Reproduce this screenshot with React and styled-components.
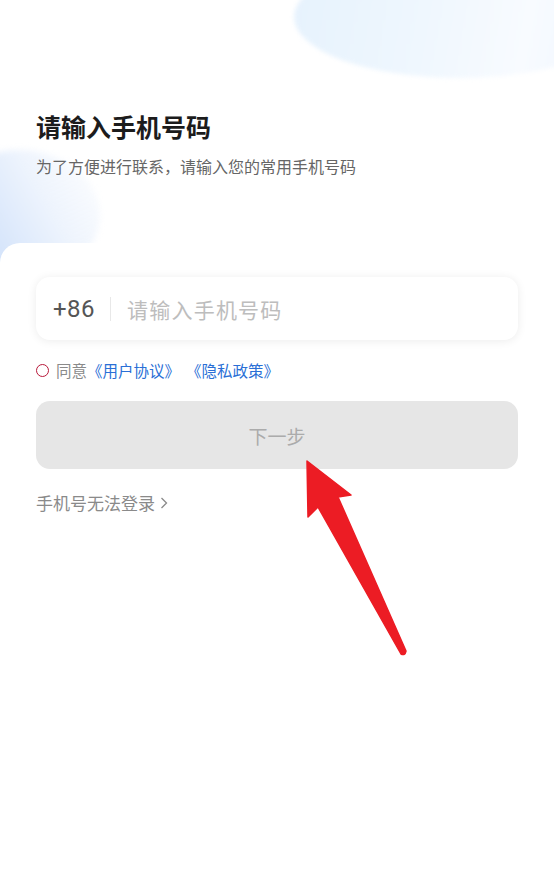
import React from "react";
import styled, { createGlobalStyle } from "styled-components";

const Global = createGlobalStyle`
  html, body { margin: 0; padding: 0; background: #fff; }
  body { font-family: "Noto Sans CJK SC", "Noto Sans", sans-serif; }
  * { box-sizing: border-box; }
`;

const Page = styled.div`
  position: relative;
  width: 554px;
  height: 883px;
  overflow: hidden;
  background: #fff;
`;

const BlobTop = styled.div`
  position: absolute;
  left: 294px;
  top: -44px;
  width: 330px;
  height: 122px;
  border-radius: 50%;
  background: linear-gradient(100deg, #e6f2fd 0%, #eff7fe 40%, #f8fbff 70%, #edf5fe 100%);
  filter: blur(2px);
`;

const BlobLeft = styled.div`
  position: absolute;
  left: -60px;
  top: 150px;
  width: 160px;
  height: 130px;
  border-radius: 50%;
  background: linear-gradient(60deg, #bcd3f8 0%, #d8e6fb 35%, #eef4fd 65%, rgba(255,255,255,0) 100%);
  filter: blur(3px);
`;

const Header = styled.header`
  position: relative;
  padding: 108px 36px 0;
  height: 243px;
`;

const Title = styled.h1`
  margin: 0;
  font-size: 25px;
  line-height: 36px;
  font-weight: 700;
  color: #1c1c1c;
`;

const Subtitle = styled.p`
  margin: 10px 0 0;
  font-size: 16px;
  line-height: 24px;
  color: #666;
`;

const Sheet = styled.main`
  position: relative;
  background: #fff;
  border-radius: 20px 20px 0 0;
  padding: 34px 36px 0;
  display: flex;
  flex-direction: column;
`;

const InputCard = styled.div`
  height: 63px;
  border-radius: 14px;
  background: #fff;
  box-shadow: 0 1px 10px rgba(0, 0, 0, 0.08);
  display: flex;
  align-items: center;
  padding: 0 17px;
`;

const Code = styled.span`
  font-family: "Roboto", "Noto Sans", sans-serif;
  font-size: 24px;
  letter-spacing: 0.5px;
  color: #555;
`;

const Divider = styled.span`
  width: 1px;
  height: 24px;
  background: #e8e8e8;
  margin: 0 16px 0 15px;
`;

const Placeholder = styled.span`
  font-size: 21px;
  color: #bdbdbd;
  letter-spacing: 1.2px;
`;

const Agree = styled.div`
  margin-top: 19px;
  display: flex;
  align-items: center;
  font-size: 15.5px;
  line-height: 22px;
  color: #8a8a8a;
`;

const Radio = styled.span`
  width: 13px;
  height: 13px;
  border-radius: 50%;
  border: 1.6px solid #b8183a;
  margin: 0 7px 0 0;
`;

const Link = styled.span`
  color: #2a6fd6;
  margin-left: ${(p) => (p.$gap ? "6px" : "0")};
`;

const NextButton = styled.button`
  margin-top: 20px;
  height: 68px;
  border: none;
  border-radius: 14px;
  background: #e6e6e6;
  color: #ababab;
  font-family: inherit;
  font-size: 19px;
  display: flex;
  align-items: center;
  justify-content: center;
`;

const Trouble = styled.div`
  margin-top: 22px;
  display: flex;
  align-items: center;
  font-size: 17px;
  line-height: 24px;
  color: #8a8a8a;
  gap: 4px;
`;

const Arrow = styled.svg`
  position: absolute;
  left: 0;
  top: 0;
  pointer-events: none;
`;

export default function App() {
  return (
    <Page>
      <Global />
      <BlobTop />
      <BlobLeft />
      <Header>
        <Title>请输入手机号码</Title>
        <Subtitle>为了方便进行联系，请输入您的常用手机号码</Subtitle>
      </Header>
      <Sheet>
        <InputCard>
          <Code>+86</Code>
          <Divider />
          <Placeholder>请输入手机号码</Placeholder>
        </InputCard>
        <Agree>
          <Radio />
          同意<Link>《用户协议》</Link>
          <Link $gap>《隐私政策》</Link>
        </Agree>
        <NextButton>下一步</NextButton>
        <Trouble>
          手机号无法登录
          <svg width="10" height="14" viewBox="0 0 10 14">
            <path d="M2.5 2 L7.5 7 L2.5 12" fill="none" stroke="#8a8a8a" strokeWidth="1.3" />
          </svg>
        </Trouble>
      </Sheet>
      <Arrow width="554" height="883" viewBox="0 0 554 883">
        <path
          d="M307 461 L351 495 L338 497 L406 651 Q405 656 401 654 L318 507 L308 517 Z"
          fill="#ec1c24"
          stroke="#ec1c24"
          strokeWidth="1.5"
          strokeLinejoin="round"
        />
      </Arrow>
    </Page>
  );
}
